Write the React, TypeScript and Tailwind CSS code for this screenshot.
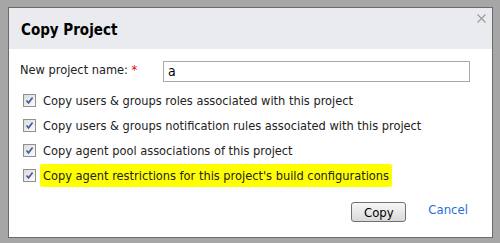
import React from "react";

const rows = [
  "Copy users & groups roles associated with this project",
  "Copy users & groups notification rules associated with this project",
  "Copy agent pool associations of this project",
];

function Check() {
  return (
    <span className="flex h-[13px] w-[13px] shrink-0 items-center justify-center border border-[#8e8f8f] bg-gradient-to-br from-[#dcdcdc] to-[#fbfbfb]">
      <svg width="9" height="9" viewBox="0 0 9 9">
        <path d="M1.5 4.5 L3.5 6.8 L7.6 1.4" fill="none" stroke="#4a5f97" strokeWidth="1.7" />
      </svg>
    </span>
  );
}

export default function App() {
  return (
    <div className="h-[243px] w-[500px] bg-[#a6a6a6] pl-[8px] pt-[7px]" style={{ fontFamily: "'DejaVu Sans Condensed', 'DejaVu Sans', sans-serif" }}>
      <div className="flex h-[231px] w-[485px] flex-col border border-[#6b6b6b] bg-white">
        <div className="relative flex h-[41px] items-center bg-[#e9ebee] pl-[12px] pt-[4px]">
          <span className="text-[15px] font-bold text-black">Copy Project</span>
          <svg className="absolute right-[6px] top-[6px]" width="9" height="9" viewBox="0 0 9 9">
            <path d="M0.5 0.5 L8.5 8.5 M8.5 0.5 L0.5 8.5" stroke="#9a9a9a" strokeWidth="1.1" />
          </svg>
        </div>
        <div className="flex flex-col px-[11px] pt-[12px] text-[12.7px] text-[#222]">
          <div className="flex items-center">
            <span className="w-[143px] -mt-[4px]">
              New project name: <span className="text-[#e00]">*</span>
            </span>
            <div className="flex h-[21px] w-[307px] items-center border border-[#a9a9a9] pl-[4px] text-[14px] text-black">a</div>
          </div>
          <div className="mt-[9px] flex flex-col gap-[6px]">
            {rows.map((r) => (
              <div key={r} className="flex h-[19px] items-center pl-[3px]">
                <Check />
                <span className="ml-[7px]">{r}</span>
              </div>
            ))}
            <div className="flex h-[19px] items-center pl-[3px]">
              <Check />
              <span className="ml-[4px] rounded-[2px] bg-[#ffff00] px-[3px] py-[2px]">
                Copy agent restrictions for this project's build configurations
              </span>
            </div>
          </div>
          <div className="mt-[17px] flex items-center justify-end pr-[13px]">
            <button className="h-[20px] w-[55px] rounded-[3px] border border-[#707070] bg-gradient-to-b from-[#f6f6f6] to-[#dadada] text-[13px] text-black">
              Copy
            </button>
            <span className="ml-[22px] -mt-[5px] text-[13px] text-[#1f6fd4]">Cancel</span>
          </div>
        </div>
      </div>
    </div>
  );
}
